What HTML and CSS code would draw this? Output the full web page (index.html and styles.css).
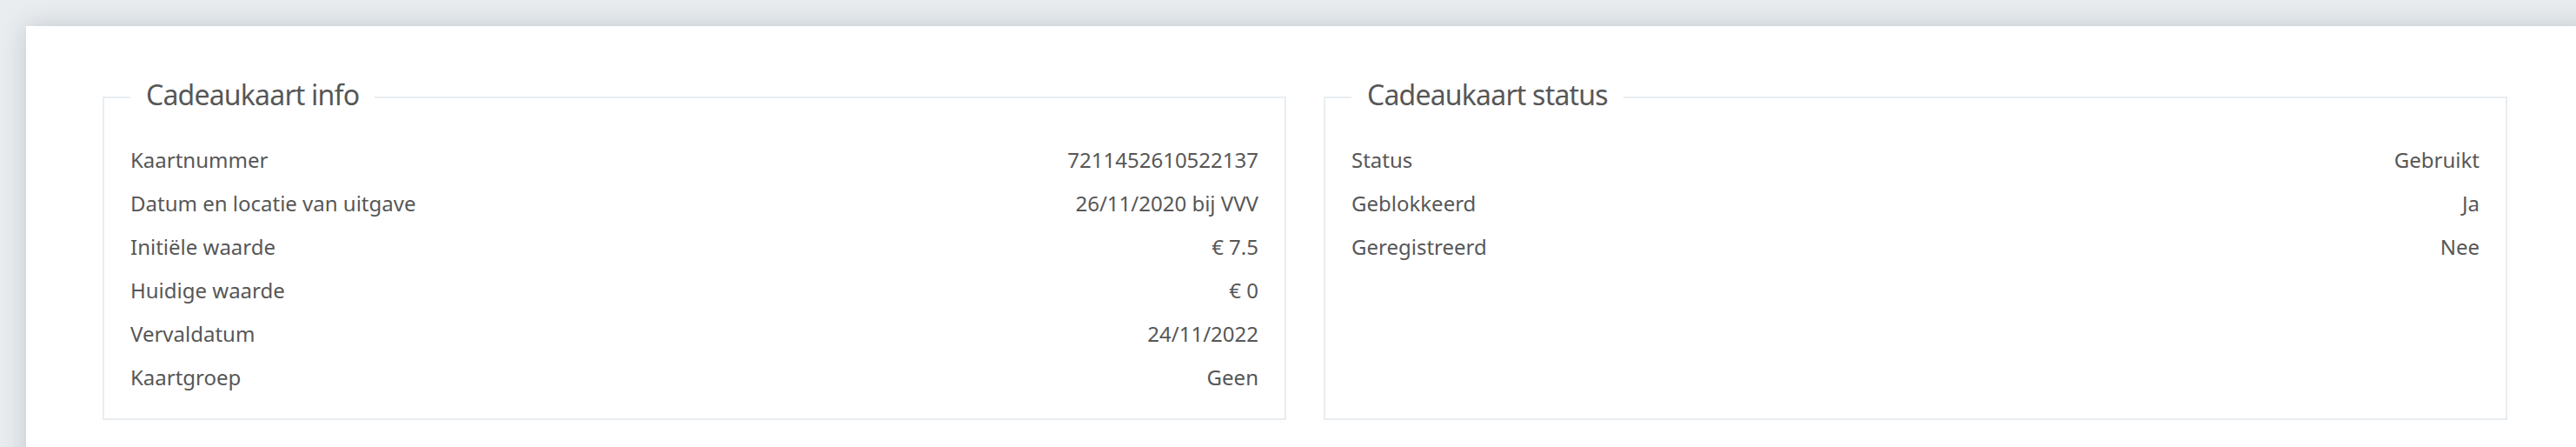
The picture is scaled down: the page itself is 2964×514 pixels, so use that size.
FILE: index.html
```html
<!DOCTYPE html>
<html lang="nl">
<head>
<meta charset="utf-8">
<title>Cadeaukaart</title>
<link rel="stylesheet" href="styles.css">
</head>
<body>
<main class="card">
  <div class="grid">
    <fieldset class="panel">
      <legend class="panel-title">Cadeaukaart info</legend>
      <div class="row"><span>Kaartnummer</span><span>7211452610522137</span></div>
      <div class="row"><span>Datum en locatie van uitgave</span><span>26/11/2020 bij VVV</span></div>
      <div class="row"><span>Initiële waarde</span><span>€ 7.5</span></div>
      <div class="row"><span>Huidige waarde</span><span>€ 0</span></div>
      <div class="row"><span>Vervaldatum</span><span>24/11/2022</span></div>
      <div class="row"><span>Kaartgroep</span><span>Geen</span></div>
    </fieldset>
    <fieldset class="panel">
      <legend class="panel-title">Cadeaukaart status</legend>
      <div class="row"><span>Status</span><span>Gebruikt</span></div>
      <div class="row"><span>Geblokkeerd</span><span>Ja</span></div>
      <div class="row"><span>Geregistreerd</span><span>Nee</span></div>
    </fieldset>
  </div>
</main>
</body>
</html>
```
FILE: styles.css
```css
html, body {
  margin: 0;
  padding: 0;
}
body {
  background: #e9edf0;
  font-family: "Noto Sans", "Open Sans", sans-serif;
  color: #575757;
  overflow: hidden;
  height: 514px;
  padding: 30px 0 0 30px;
  box-sizing: border-box;
}
.card {
  background: #ffffff;
  width: 2960px;
  height: 600px;
  box-sizing: border-box;
  padding: 55px 0 0 88px;
  box-shadow: 0 0 28px rgba(40, 50, 60, 0.2);
}
.grid {
  display: grid;
  grid-template-columns: 1362px 1362px;
  column-gap: 43px;
  align-items: start;
}
.panel {
  margin: 0;
  border: 2px solid #e8edf1;
  padding: 21px 30px 22px;
  min-width: 0;
  align-self: stretch;
}
.panel-title {
  font-size: 32px;
  line-height: 48px;
  letter-spacing: -0.8px;
  padding: 0 18px 5px;
  color: #575757;
}
.row {
  display: flex;
  justify-content: space-between;
  font-size: 24px;
  line-height: 50px;
}
```
